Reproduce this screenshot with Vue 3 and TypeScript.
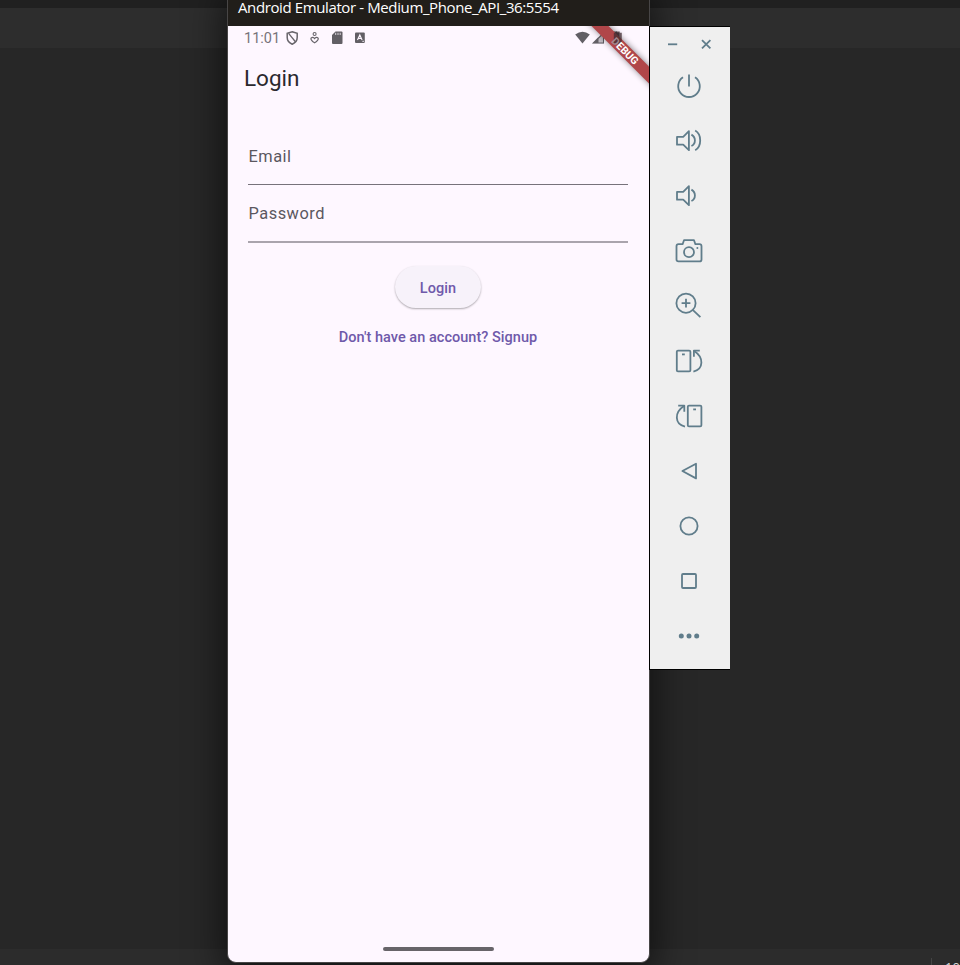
<script setup lang="ts">
import { ref } from 'vue'

interface Control {
  name: string
  paths: string[]
  dots?: { x: number; y: number; r: number }[]
}

const speaker = 'M4 11.9H10.2L15.9 6.2V25.2L10.2 19.7H4Z'
const nearWave = 'M18.4 9.6Q21.9 11.6 21.9 15.5T18.4 21'

const controls: Control[] = [
  { name: 'Power', paths: ['M10 7.2A10.8 10.8 0 1 0 22 7.2', 'M16 4.6V16.6'] },
  { name: 'Volume up', paths: [speaker, nearWave, 'M22.2 5.6Q27.2 8.6 27.2 15.4T22.2 25.2'] },
  { name: 'Volume down', paths: [speaker, nearWave] },
  {
    name: 'Screenshot',
    paths: [
      'M5.5 9.2H9.6L11 5.2H21L22.4 9.2H26.5Q28.5 9.2 28.5 11.2V24.4Q28.5 26.4 26.5 26.4H5.5Q3.5 26.4 3.5 24.4V11.2Q3.5 9.2 5.5 9.2Z',
      'M11 17.2a5 5 0 1 0 10 0a5 5 0 1 0 -10 0',
    ],
    dots: [{ x: 24.4, y: 13, r: 1 }],
  },
  { name: 'Zoom', paths: ['M3.4 13.2a9.6 9.6 0 1 0 19.2 0a9.6 9.6 0 1 0 -19.2 0', 'M13 8.8V17.6M8.6 13.2H17.4', 'M20 20.2L27.4 27.2'] },
  {
    name: 'Rotate left',
    paths: ['M5 5.6H16.2Q17.4 5.6 17.4 6.8V25.2Q17.4 26.4 16.2 26.4H5Q3.8 26.4 3.8 25.2V6.8Q3.8 5.6 5 5.6Z', 'M9 9.4H11.8', 'M20.4 26.6C30.8 24 31 12.4 21.2 6', 'M26.8 5.6H20.9V11.8'],
  },
  {
    name: 'Rotate right',
    paths: ['M16 5.6H27.2Q28.4 5.6 28.4 6.8V25.2Q28.4 26.4 27.2 26.4H16Q14.8 26.4 14.8 25.2V6.8Q14.8 5.6 16 5.6Z', 'M20.2 9.4H23', 'M12 26.6C1.4 24 1.2 12.4 11 6', 'M5.2 5.6H11.3V11.8'],
  },
  { name: 'Back', paths: ['M9.4 16L23 8.7V23.4Z'] },
  { name: 'Home', paths: ['M7.4 16a8.6 8.6 0 1 0 17.2 0a8.6 8.6 0 1 0 -17.2 0'] },
  { name: 'Overview', paths: ['M10 9H22Q23 9 23 10V22Q23 23 22 23H10Q9 23 9 22V10Q9 9 10 9Z'] },
  { name: 'More', paths: [], dots: [{ x: 8.3, y: 16, r: 2.5 }, { x: 16, y: 16, r: 2.5 }, { x: 23.7, y: 16, r: 2.5 }] },
]

const email = ref('')
const password = ref('')
</script>

<template>
  <main class="desktop">
    <div class="strip top"></div>
    <div class="strip tabs"></div>
    <div class="strip body"></div>
    <div class="strip taskbar"><span class="clock">10</span></div>

    <section class="emulator">
      <header class="titlebar"><span>Android Emulator - Medium_Phone_API_36:5554</span></header>
      <div class="screen">
        <div class="status">
          <span class="time">11:01</span>
          <svg class="notices" width="80" height="16" viewBox="0 0 80 16">
            <g fill="none" stroke="#68656b" stroke-width="1.5">
              <path d="M6.2 1.7L11.2 3.4V7.6C11.2 11 9 13.1 6.2 14.2C3.4 13.1 1.2 11 1.2 7.6V3.4Z" />
              <path d="M2.6 3.4L9.6 12" stroke-width="1.3" />
              <circle cx="28.6" cy="4" r="1.5" stroke-width="1.1" />
              <path d="M25 8.1Q27 6.5 28.6 8.6Q30.2 6.5 32.2 8.1Q32.8 10.2 28.6 12.8Q24.4 10.2 25 8.1Z" stroke-width="1.2" />
            </g>
            <path fill="#625f65" d="M49.5 1.5H55.5Q56.5 1.5 56.5 2.5V13Q56.5 14 55.5 14H47Q46 14 46 13V5Z" />
            <path stroke="#d9d3da" stroke-width="1" d="M49.7 2.8V5M52 2.8V5M54.2 2.8V5" />
            <rect x="69" y="2.5" width="9.8" height="10.4" rx="1" fill="#625f65" />
            <path d="M71.5 10L73.8 4.8L76.1 10M72.4 8.4H75.2M76.5 11.4H77.7" fill="none" stroke="#fef7ff" stroke-width="1.1" />
          </svg>
          <svg class="signals" width="50" height="16" viewBox="0 0 50 16">
            <path fill="#625f65" d="M.2 4.6Q7.5-1.2 14.8 4.6L7.5 13.4Z" />
            <path fill="#c4bfc6" d="M29 1.6V13.6H17Z" />
            <path fill="#625f65" d="M23.5 7.1V13.6H17ZM28 2.6H29V13.6H23.5V12.6H28Z" />
            <path fill="#625f65" d="M23.2 7.8L29 1.6V3.4L23.2 9.2Z" />
            <path fill="#49464b" d="M38.5 1.4H42V2.6H44.2V14H36.2V2.6H38.5Z" />
          </svg>
        </div>
        <svg class="ribbon" width="70" height="70" viewBox="0 0 70 70">
          <defs>
            <filter id="ribbon-shadow" x="-30%" y="-30%" width="160%" height="160%"><feGaussianBlur stdDeviation="3" /></filter>
          </defs>
          <path d="M3-10L80 67V50L20-10Z" fill="#000" opacity=".48" filter="url(#ribbon-shadow)" />
          <path d="M2.5-10L80 67.5V50.5L19.5-10Z" fill="#b04649" />
          <path d="M37.2 5.6H40.7V6.8H42.8V18.2H34.8V6.8H37.2Z" fill="#422c31" opacity=".75" />
          <text x="46" y="28.6" transform="rotate(45 46 25)" text-anchor="middle" textLength="33" lengthAdjust="spacingAndGlyphs"><tspan fill="#a08a90">D</tspan><tspan>EBUG</tspan></text>
        </svg>
        <h1>Login</h1>
        <form @submit.prevent>
          <label class="field"><span v-if="!email">Email</span><input v-model="email" type="email" /></label>
          <label class="field"><span v-if="!password">Password</span><input v-model="password" type="password" /></label>
          <button class="login">Login</button>
          <a class="signup">Don't have an account? Signup</a>
        </form>
        <div class="handle"></div>
      </div>
    </section>

    <aside class="controls">
      <div class="window-actions">
        <svg width="12" height="12" viewBox="0 0 12 12"><path d="M1 6.3H10.2" /></svg>
        <svg width="12" height="12" viewBox="0 0 12 12"><path d="M2 2.2L10.4 10.4M10.4 2.2L2 10.4" /></svg>
      </div>
      <button v-for="control in controls" :key="control.name" class="control">
        <svg width="32" height="32" viewBox="0 0 32 32">
          <path v-for="d in control.paths" :key="d" :d="d" />
          <circle v-for="dot in control.dots" :key="dot.x" :cx="dot.x" :cy="dot.y" :r="dot.r" />
        </svg>
      </button>
    </aside>
  </main>
</template>

<style>
body { margin: 0; overflow: hidden; background: #272727; }
</style>

<style scoped>
* { box-sizing: border-box; }
.desktop { position: relative; width: 960px; height: 965px; overflow: hidden; display: grid; grid-template-rows: 8px 40px 1fr 16px; font-family: Roboto, sans-serif; }
.top { background: #202020; }
.tabs { background: #2d2d2d; }
.body { background: #272727; }
.taskbar { background: #2c2c2c; display: flex; justify-content: flex-end; align-items: flex-start; overflow: hidden; }
.clock { width: 29px; height: 10px; margin-top: 9px; padding-left: 13px; border-left: 1px solid #444; color: #ddd; font: 13px/18px "Open Sans", sans-serif; white-space: nowrap; }
.emulator { position: absolute; left: 227px; top: -10px; width: 423px; height: 973px; border: 1px solid #484646; border-radius: 0 0 9px 9px; overflow: hidden; display: flex; flex-direction: column; background: #fef7ff; }
.emulator { box-shadow: 0 8px 36px 4px rgb(0 0 0 / 58%); }
.titlebar { flex: 0 0 35px; background: #211e1a; color: #fff; padding: 6px 0 0 10px; font: 15px/20px "Open Sans", sans-serif; white-space: nowrap; }
.titlebar span { display: inline-block; letter-spacing: -.385px; }
.screen { position: relative; flex: 1; display: flex; flex-direction: column; }
.status { display: flex; align-items: center; height: 24px; padding: 0 24px 0 16px; color: #77737a; }
.time { width: 42px; font-size: 14.5px; letter-spacing: 0; white-space: nowrap; }
.signals { margin-left: auto; }
.ribbon { position: absolute; top: 0; right: 0; overflow: hidden; }
.ribbon text { fill: #fff; font: 700 10.5px Roboto, sans-serif; }
h1 { margin: 13px 0 0 16px; height: 31px; color: #2b292f; font-size: 22.5px; line-height: 30px; font-weight: 400; letter-spacing: 0; }
form { display: flex; flex-direction: column; align-items: center; padding: 34px 21px 0 20px; }
.field { position: relative; width: 380px; height: 57px; border-bottom: 1px solid #77727b; display: flex; align-items: center; color: #5b575f; font-size: 16.4px; line-height: 20px; letter-spacing: .5px; padding: 1px 0 0 .5px; }
.field:nth-child(2) { height: 58px; padding-top: 2px; border-bottom: 2px solid #aaa4ad; }
.field input { flex: 1; min-width: 0; border: 0; outline: 0; background: transparent; font: inherit; }
.login { width: 86px; height: 42px; margin-top: 23px; padding: 2px 0 0; border: 0; border-radius: 21px; background: #f7f2fa; box-shadow: 0 1px 2px rgb(0 0 0 / 32%); color: #6f59aa; font: 500 14.5px Roboto, sans-serif; letter-spacing: .1px; }
.signup { margin-top: 20px; color: #6f59aa; font-size: 14.5px; line-height: 20px; font-weight: 500; letter-spacing: .03px; white-space: nowrap; }
.handle { width: 111px; height: 4px; margin: auto auto 11px 155px; border-radius: 2px; background: #676469; }
.controls { position: absolute; left: 649px; top: 26px; width: 81px; height: 644px; border: solid #000; border-width: 1px 0 1px 1px; background: #efefef; display: flex; flex-direction: column; align-items: center; }
.window-actions { height: 31px; width: 80px; padding: 11px 18px 0 17px; display: flex; justify-content: space-between; }
.control { display: flex; justify-content: center; align-items: center; width: 55px; height: 55px; padding: 0; border: 0; background: transparent; }
.control { margin-right: 2px; }
.controls path { fill: none; stroke: #607d8b; stroke-width: 1.8; stroke-linejoin: round; }
.controls circle { fill: #607d8b; }
</style>
